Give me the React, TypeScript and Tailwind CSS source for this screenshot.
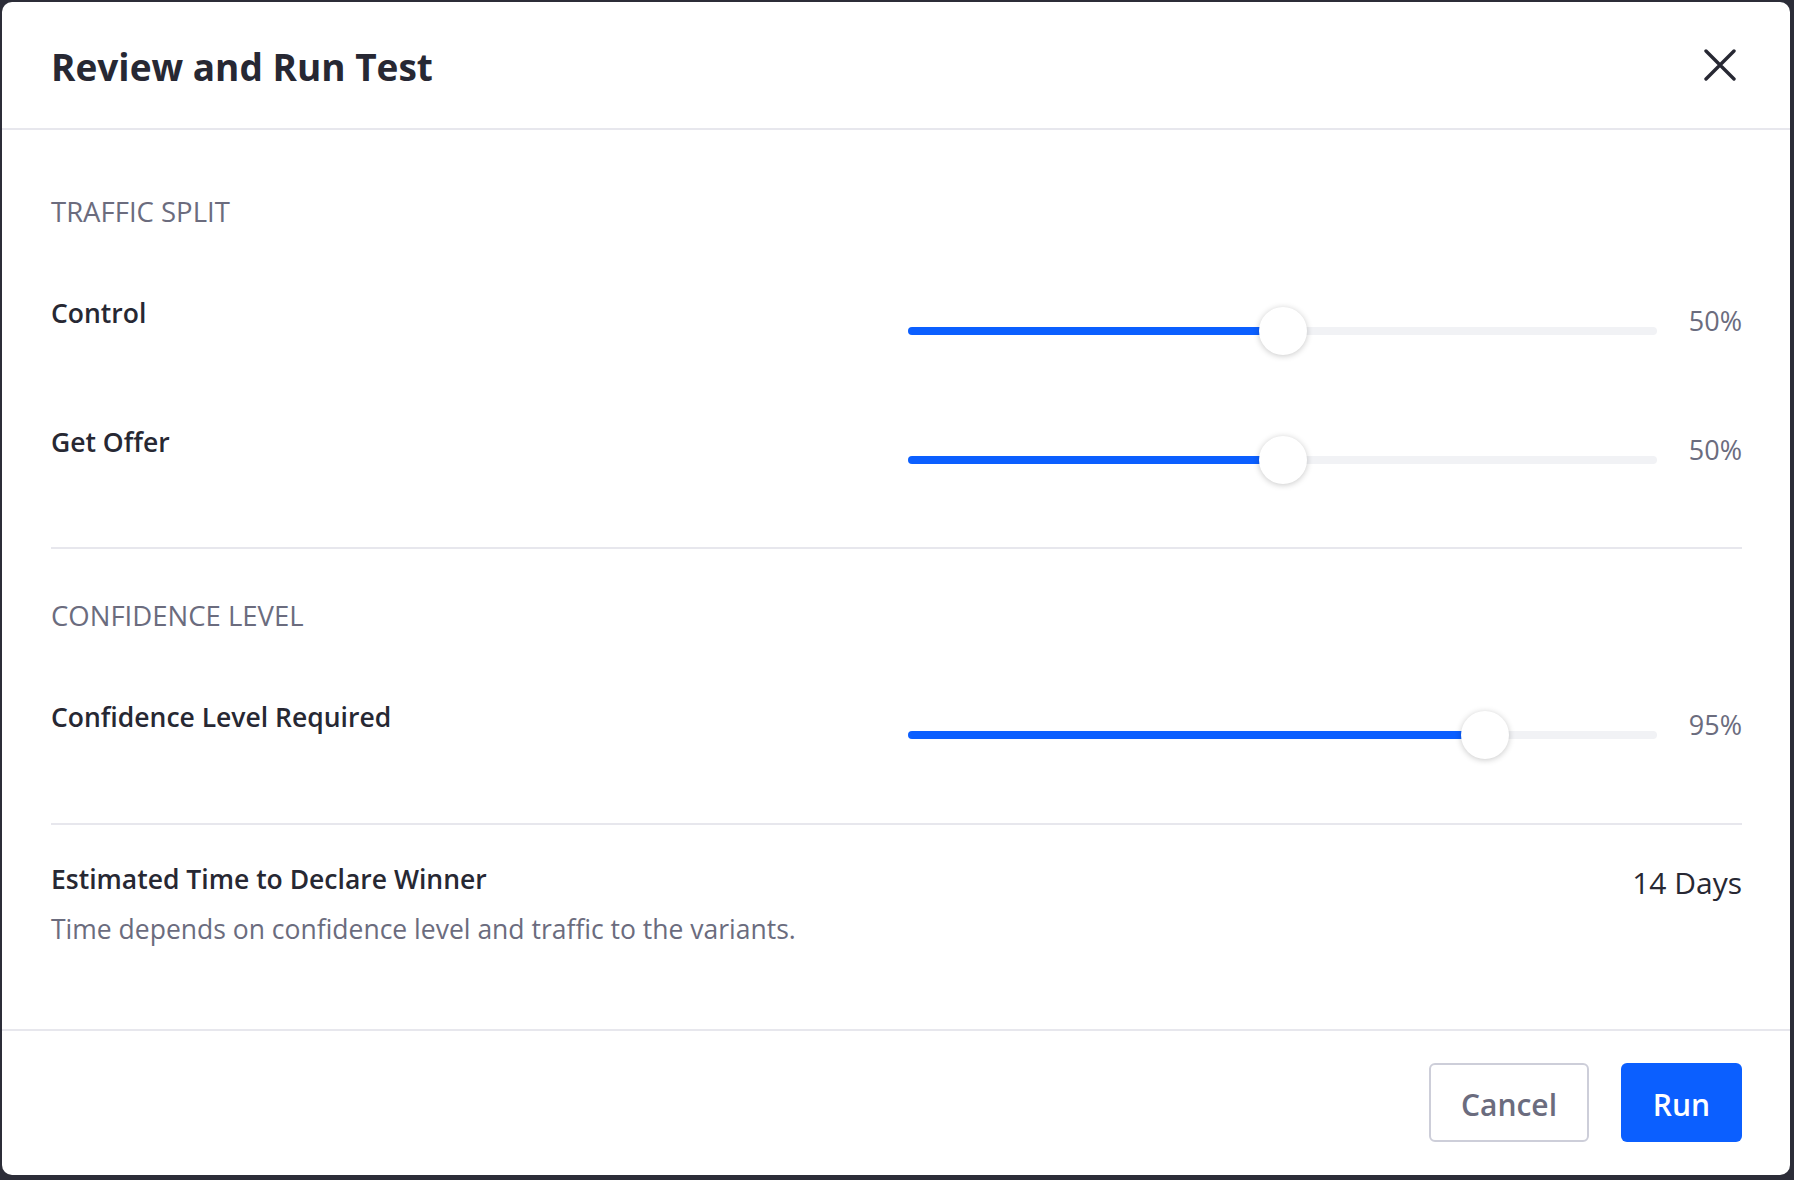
import React from "react";

const FONT = { fontFamily: '"Open Sans", "Noto Sans", "Liberation Sans", sans-serif' };

function Slider({ pct }: { pct: number }) {
  const center = 24 + pct * (749 - 48);
  return (
    <div className="relative mt-[15px] h-[48px] w-[749px] shrink-0">
      <div className="absolute left-0 right-0 top-[20px] h-[8px] rounded-full bg-[#f1f2f5]" />
      <div
        className="absolute left-0 top-[20px] h-[8px] rounded-full bg-[#0b5fff]"
        style={{ width: center }}
      />
      <div
        className="absolute top-0 h-[48px] w-[48px] rounded-full bg-white shadow-[0_1px_6px_rgba(0,0,0,0.22)]"
        style={{ left: center - 24 }}
      />
    </div>
  );
}

function Row({ label, pct, value, h }: { label: string; pct: number; value: string; h: string }) {
  return (
    <div className={`flex items-start ${h}`}>
      <div className="mt-[1px] flex-1 text-[26.5px] font-semibold leading-[40px] text-[#272833]">{label}</div>
      <div className="flex w-[834px] items-start">
        <Slider pct={pct} />
        <div className="mt-[9px] flex-1 text-right text-[27px] leading-[40px] text-[#6b6c7e]">{value}</div>
      </div>
    </div>
  );
}

export default function App() {
  return (
    <div className="h-[1180px] w-full bg-[#2c2d38] pl-[2px] pt-[2px]" style={FONT}>
      <div className="flex h-[1173px] w-[1788px] flex-col overflow-hidden rounded-[10px] bg-white">
        {/* Header */}
        <div className="flex h-[128px] shrink-0 items-center justify-between border-b-2 border-[#e7e7ed] pl-[49px] pr-[54px]">
          <h1 className="pt-[3px] text-[37px] font-bold leading-[48px] text-[#272833]">Review and Run Test</h1>
          <button className="flex h-[32px] w-[32px] items-center justify-center" aria-label="Close">
            <svg width="32" height="32" viewBox="0 0 32 32" fill="none">
              <path d="M2 2 30 30M30 2 2 30" stroke="#272833" strokeWidth="3.4" strokeLinecap="round" />
            </svg>
          </button>
        </div>

        {/* Body */}
        <div className="flex-1 pl-[49px] pr-[48px]">
          <div className="border-b-2 border-[#e7e7ed] pt-[62px]">
            <div className="text-[27.5px] uppercase leading-[40px] text-[#6b6c7e]">Traffic Split</div>
            <div className="mt-[60px]">
              <Row label="Control" pct={0.5} value="50%" h="h-[129px]" />
              <Row label="Get Offer" pct={0.5} value="50%" h="h-[126px]" />
            </div>
          </div>

          <div className="border-b-2 border-[#e7e7ed] pt-[47px]">
            <div className="text-[27.5px] uppercase leading-[40px] text-[#6b6c7e]">Confidence Level</div>
            <div className="mt-[60px]">
              <Row label="Confidence Level Required" pct={15 / 19} value="95%" h="h-[127px]" />
            </div>
          </div>

          <div className="flex items-start justify-between pt-[34px]">
            <div>
              <div className="text-[26.5px] font-semibold leading-[40px] text-[#272833]">
                Estimated Time to Declare Winner
              </div>
              <div className="mt-[10px] text-[26.5px] leading-[40px] text-[#6b6c7e]">
                Time depends on confidence level and traffic to the variants.
              </div>
            </div>
            <div className="mt-[4px] text-[30px] leading-[40px] text-[#272833]">14 Days</div>
          </div>
        </div>

        {/* Footer */}
        <div className="flex h-[146px] shrink-0 items-start justify-end gap-[32px] border-t-2 border-[#e7e7ed] pr-[48px] pt-[32px]">
          <button className="flex h-[79px] w-[160px] items-center justify-center rounded-[6px] border-2 border-[#cdced9] bg-white pt-[3px] text-[30px] font-semibold text-[#6b6c7e]">
            Cancel
          </button>
          <button className="flex h-[79px] w-[121px] items-center justify-center rounded-[6px] bg-[#0b5fff] pt-[3px] text-[30px] font-semibold text-white">
            Run
          </button>
        </div>
      </div>
    </div>
  );
}
